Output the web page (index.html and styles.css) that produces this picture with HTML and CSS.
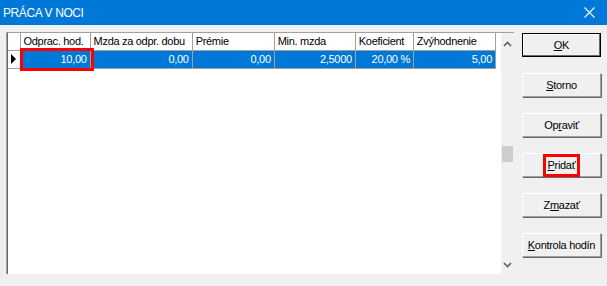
FILE: index.html
```html
<!DOCTYPE html>
<html lang="sk">
<head>
<meta charset="utf-8">
<title>PRÁCA V NOCI</title>
<link rel="stylesheet" href="styles.css">
</head>
<body>
<div class="window">
  <div class="titlebar">
    <span class="title">PRÁCA V NOCI</span>
    <svg class="close" width="11" height="11" viewBox="0 0 11 11"><path d="M0.5 0.5 L10.5 10.5 M10.5 0.5 L0.5 10.5" stroke="#fff" stroke-width="1.1" fill="none"/></svg>
  </div>
  <div class="content">
    <div class="grid">
      <div class="tablewrap">
        <table class="data">
          <colgroup>
            <col class="c0"><col class="c1"><col class="c2"><col class="c3"><col class="c4"><col class="c5"><col class="c6">
          </colgroup>
          <thead>
            <tr><th class="ind"></th><th>Odprac. hod.</th><th>Mzda za odpr. dobu</th><th>Prémie</th><th>Min. mzda</th><th>Koeficient</th><th>Zvýhodnenie</th></tr>
          </thead>
          <tbody>
            <tr class="sel">
              <td class="ind"><span class="tri"></span></td>
              <td class="focus"><span class="redbox"></span>10,00</td>
              <td>0,00</td><td>0,00</td><td>2,5000</td><td>20,00 %</td><td>5,00</td>
            </tr>
          </tbody>
        </table>
      </div>
      <div class="scrollbar">
        <svg class="arrow" width="9" height="6" viewBox="0 0 9 6"><path d="M1 5 L4.5 1.5 L8 5" stroke="#606060" stroke-width="1.6" fill="none"/></svg>
        <div class="track"><div class="thumb"></div></div>
        <svg class="arrow" width="9" height="6" viewBox="0 0 9 6"><path d="M1 1 L4.5 4.5 L8 1" stroke="#606060" stroke-width="1.6" fill="none"/></svg>
      </div>
    </div>
    <div class="buttons">
      <button class="btn default"><u>O</u>K</button>
      <button class="btn"><u>S</u>torno</button>
      <button class="btn">Op<u>r</u>aviť</button>
      <button class="btn"><span class="hl"><u>P</u>ridať</span></button>
      <button class="btn">Z<u>m</u>azať</button>
      <button class="btn"><u>K</u>ontrola hodín</button>
    </div>
  </div>
</div>
</body>
</html>
```

FILE: styles.css
```css
* { box-sizing: border-box; }
html, body { margin: 0; padding: 0; }
body {
  width: 607px;
  height: 286px;
  background: #f0f0f0;
  font-family: "Liberation Sans", Arial, sans-serif;
  font-size: 11px;
  letter-spacing: -0.3px;
  color: #000;
  overflow: hidden;
}
.window { display: flex; flex-direction: column; height: 286px; }
.titlebar {
  height: 25px;
  background: #0078d7;
  color: #fff;
  display: flex;
  align-items: center;
  justify-content: space-between;
  padding: 0 12px 0 3px;
  flex: none;
}
.title { font-size: 12px; letter-spacing: -0.4px; }
.close { display: block; }
.content {
  display: flex;
  padding: 7px 0 0 6px;
  gap: 8px;
}
.grid {
  width: 508px;
  height: 242px;
  background: #fff;
  border-top: 1px solid #a0a0a0;
  border-left: 1px solid #a0a0a0;
  box-shadow: inset 1px 0 0 #696969;
  display: flex;
}
.tablewrap { width: 490px; padding-left: 1px; }
table.data {
  border-collapse: collapse;
  table-layout: fixed;
  width: 488px;
}
col.c0 { width: 12px; }
col.c1 { width: 70px; }
col.c2 { width: 102px; }
col.c3 { width: 82px; }
col.c4 { width: 81px; }
col.c5 { width: 58px; }
col.c6 { width: 82px; }
th, td {
  border-right: 1px solid #a0a0a0;
  border-bottom: 1px solid #a0a0a0;
  padding: 0 3px;
  white-space: nowrap;
  overflow: hidden;
  font-weight: normal;
}
th {
  height: 17px;
  text-align: left;
  padding-left: 3px;
  background: #fff;
}
td { height: 18px; text-align: right; }
td.ind, th.ind { padding: 0; }
tr.sel td { background: #0078d7; color: #fff; }
tr.sel td.ind { background: #fff; }
.tri {
  display: block;
  width: 0; height: 0;
  margin-left: 3px;
  border-top: 5px solid transparent;
  border-bottom: 5px solid transparent;
  border-left: 5px solid #000;
}
td.focus { position: relative; overflow: visible; }
.redbox {
  position: absolute;
  left: -1px; top: -3px;
  width: 74px; height: 23px;
  border: 3px solid #ff0000;
}
.scrollbar {
  margin-left: 5px;
  width: 17px;
  background: #f0f0f0;
  display: flex;
  flex-direction: column;
  align-items: center;
  padding: 8px 0 6px;
}
.track { flex: 1; width: 100%; position: relative; }
.thumb {
  position: absolute;
  left: 1px; right: 1px;
  top: 99px; height: 16px;
  background: #cdcdcd;
}
.buttons {
  display: flex;
  flex-direction: column;
  gap: 16px;
  padding-top: 1px;
}
.btn {
  width: 79px;
  height: 24px;
  background: #f0f0f0;
  border: 1px solid #a0a0a0;
  border-color: #fff #a0a0a0 #a0a0a0 #fff;
  box-shadow: 1px 1px 0 #696969;
  font-family: "Liberation Sans", Arial, sans-serif;
  font-size: 11px;
  letter-spacing: -0.3px;
  color: #000;
  padding: 0;
  display: flex;
  align-items: center;
  justify-content: center;
}
.btn.default {
  border: 1px solid #000;
  box-shadow: inset -1px -1px 0 #696969, inset 1px 1px 0 #fff;
}
.hl {
  border: 3px solid #ff0000;
  padding: 2px 1px;
  line-height: 13px;
}
```
